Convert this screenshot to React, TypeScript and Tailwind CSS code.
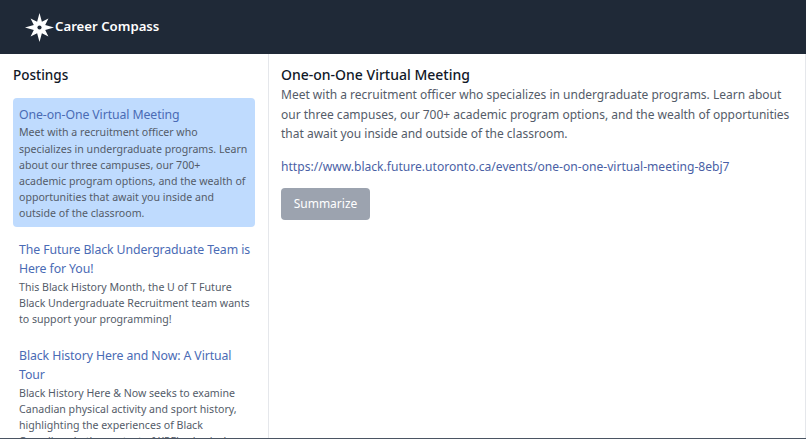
import React from 'react';

const postings = [
  {
    title: 'One-on-One Virtual Meeting',
    body: 'Meet with a recruitment officer who\nspecializes in undergraduate programs. Learn\nabout our three campuses, our 700+\nacademic program options, and the wealth of\nopportunities that await you inside and\noutside of the classroom.',
    active: true,
  },
  {
    title: 'The Future Black Undergraduate Team is\nHere for You!',
    body: 'This Black History Month, the U of T Future\nBlack Undergraduate Recruitment team wants\nto support your programming!',
  },
  {
    title: 'Black History Here and Now: A Virtual\nTour',
    body: "Black History Here & Now seeks to examine\nCanadian physical activity and sport history,\nhighlighting the experiences of Black\nCanadians in the context of KPE's physical",
  },
];

const Logo = () => (
  <svg viewBox="-14 -14 28 28" className="w-[29px] h-[29px] shrink-0 text-white" fill="currentColor">
    <polygon points="0,-14 2.3,-5.5 8.6,-8.6 5.5,-2.3 14,0 5.5,2.3 8.6,8.6 2.3,5.5 0,14 -2.3,5.5 -8.6,8.6 -5.5,2.3 -14,0 -5.5,-2.3 -8.6,-8.6 -2.3,-5.5" />
    <circle cx="0" cy="0" r="2" fill="#1f2937" />
  </svg>
);

export default function App() {
  return (
    <div className="h-[439px] w-[806px] overflow-hidden flex flex-col bg-white border-b border-[#4b5563] font-['Noto_Sans',sans-serif]">
      <header className="h-[54px] shrink-0 bg-[#1f2937] flex items-center pl-[25px]">
        <Logo />
        <span className="text-white text-[13.2px] font-semibold ml-[1px]">Career Compass</span>
      </header>
      <div className="flex flex-1 min-h-0 border-r border-[#e5e7eb]">
        <aside className="w-[269px] shrink-0 border-r border-[#e5e7eb] px-[13px] pt-[11px] overflow-hidden">
          <h2 className="text-[13.5px] leading-[20px] font-medium text-[#111827] mb-[13px]">Postings</h2>
          {postings.map((p) => (
            <div key={p.title} className={`px-[6px] pt-[7px] pb-[6.5px] mb-[5.5px] rounded whitespace-pre ${p.active ? 'bg-[#bfdbfe]' : ''}`}>
              <div className="text-[12.3px] leading-[19.4px] tracking-[-0.1px] text-[#4a6bb5]">{p.title}</div>
              <p className="text-[10.6px] leading-[16.1px] text-[#545c69]">{p.body}</p>
            </div>
          ))}
        </aside>
        <main className="flex-1 pl-[12px] pr-[10px] pt-[11px]">
          <h1 className="text-[14px] leading-[20px] font-medium text-[#111827]">One-on-One Virtual Meeting</h1>
          <p className="text-[12px] leading-[19.5px] text-[#545c69]">
            Meet with a recruitment officer who specializes in undergraduate programs. Learn about our three campuses, our 700+ academic program options, and the wealth of opportunities that await you inside and outside of the classroom.
          </p>
          <a className="block mt-[13px] text-[12.1px] leading-[19.5px] text-[#4a5fa5]">
            https://www.black.future.utoronto.ca/events/one-on-one-virtual-meeting-8ebj7
          </a>
          <button className="mt-[12px] block w-[89px] h-[32px] rounded bg-[#9ca3af] text-white text-[12px]">Summarize</button>
        </main>
      </div>
    </div>
  );
}
